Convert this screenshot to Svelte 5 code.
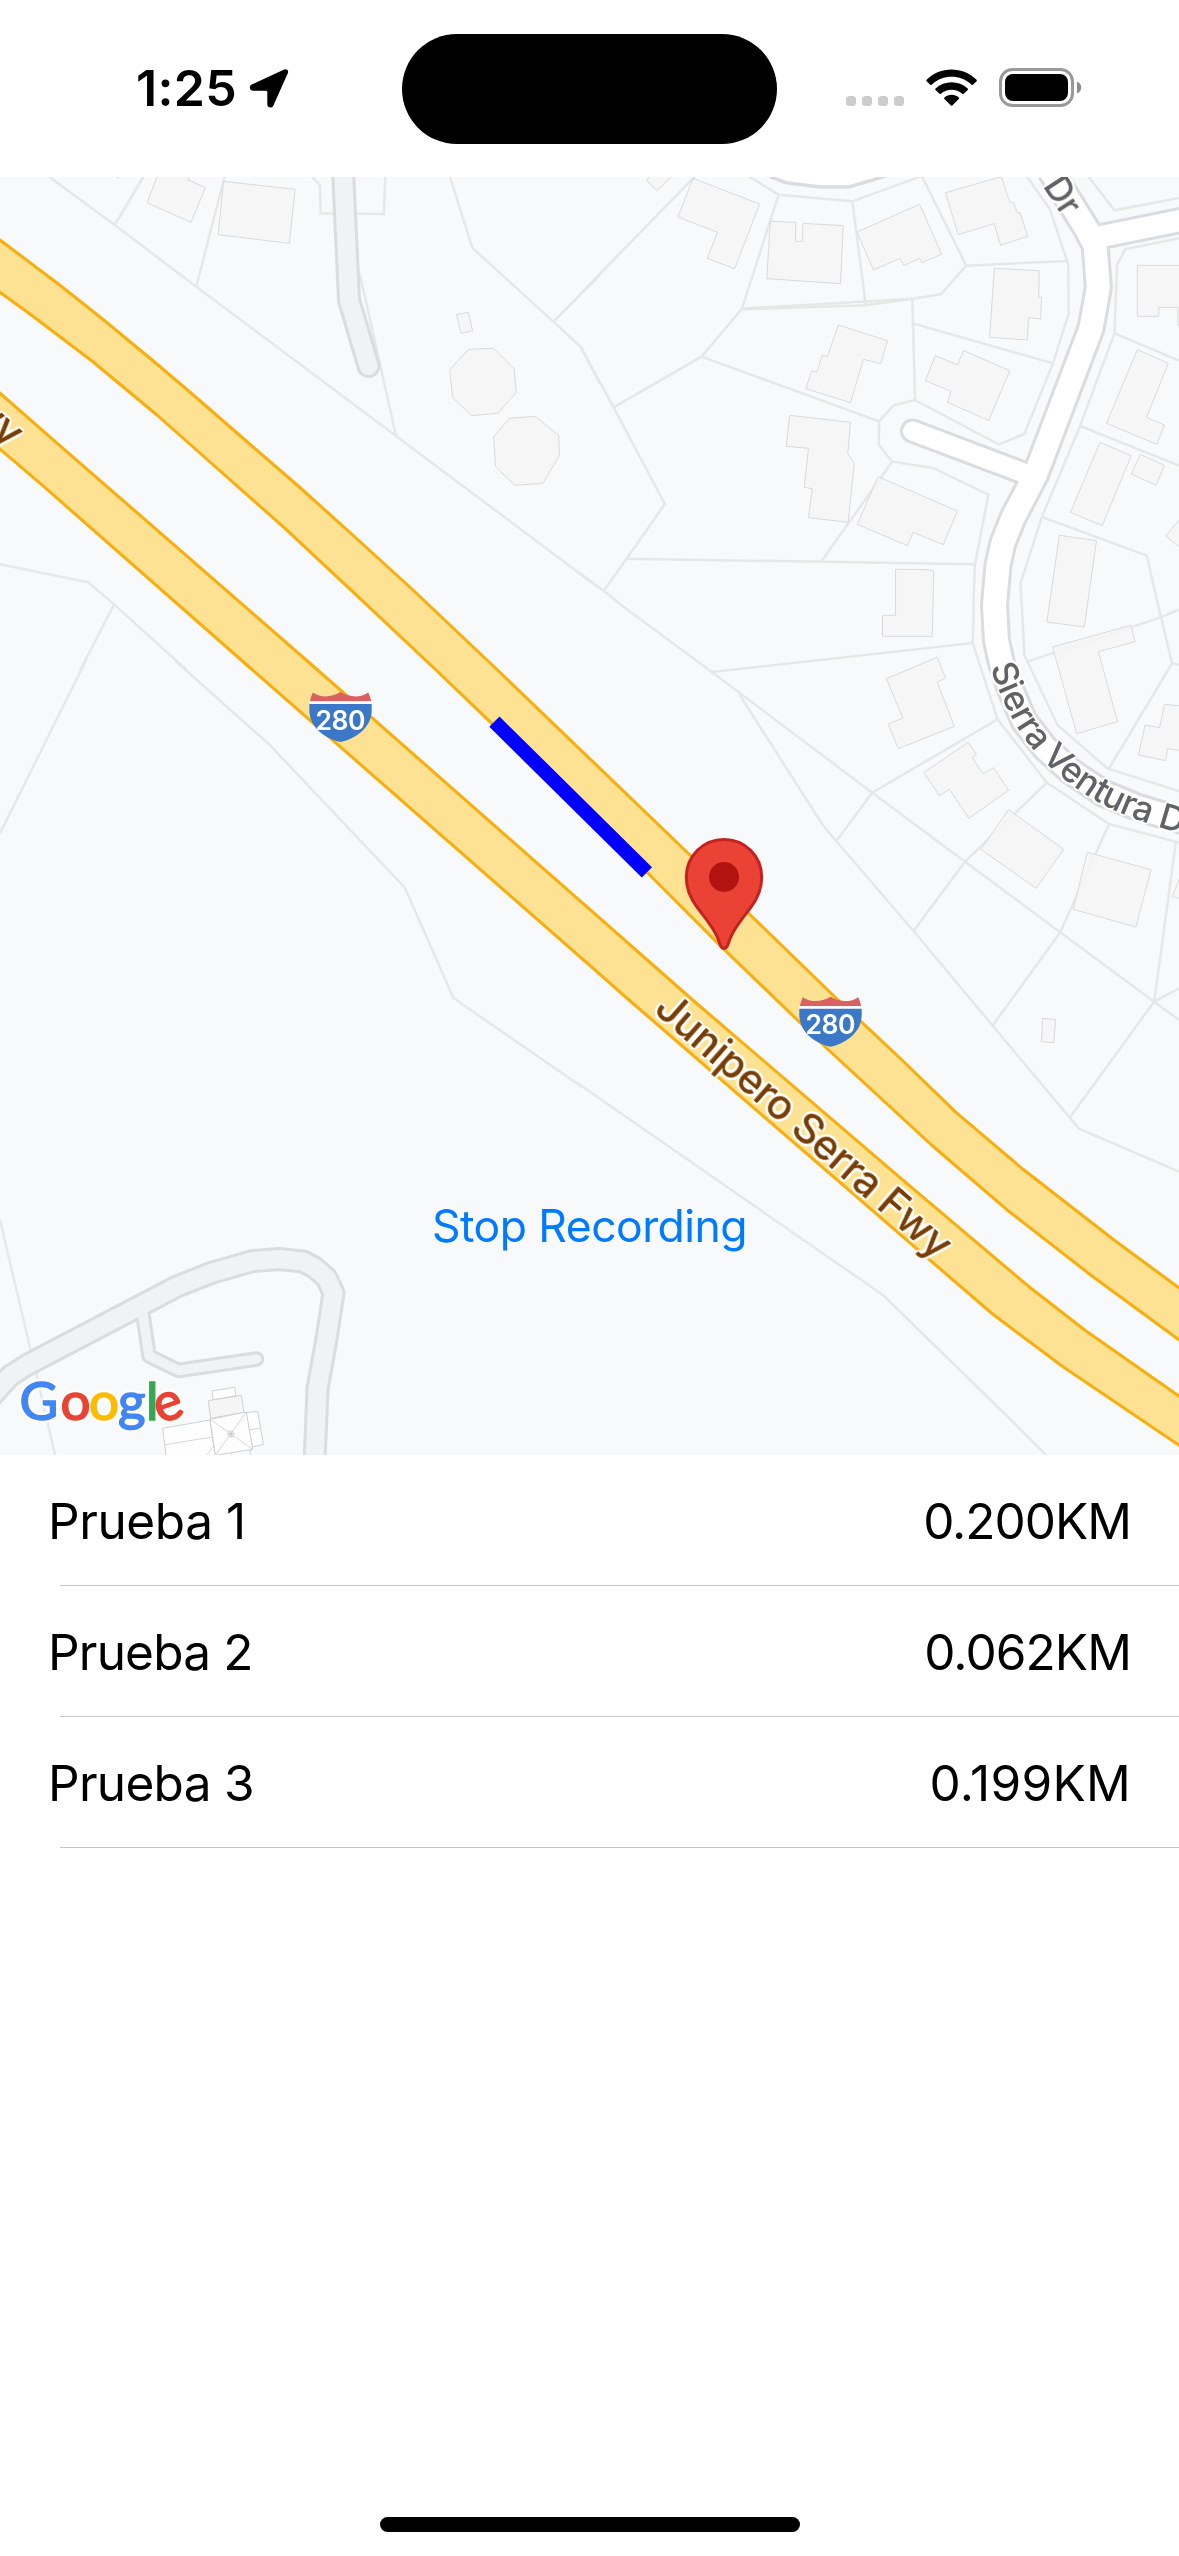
<script>
  const rows = [
    { name: 'Prueba 1', distance: '0.200KM', nameTracking: -0.4, tracking: -1 },
    { name: 'Prueba 2', distance: '0.062KM', nameTracking: -0.8, tracking: -0.9 },
    { name: 'Prueba 3', distance: '0.199KM', nameTracking: -0.7, tracking: 0.3 }
  ];

  // Map sectors, each with its own local grid: lot boundaries and building footprints.
  const sectors = [
    {
      grid: 'translate(0 170) scale(.38265 .33333)',
      lots: [
        '128,20 300,165 513,350 1035,798 1568,1256',
        '375,20 300,165',
        '587,20 513,350',
        '815,20 836,46 838,130 1003,132 1007,20',
        '940,310 1035,798',
        '1176,20 1234,233 1446,455 1519,532 1568,642',
        '1446,455 1568,315',
        '0,1183 231,1237 298,1303 488,1500',
        '298,1303 210,1500'
      ],
      buildings: [
        '303,18 308,26 313,18',
        '413,14 384,98 499,157 537,53 492,30 496,14',
        '584,34 771,58 756,220 570,194',
        '1193,434 1224,427 1235,482 1205,490',
        '1224,538 1290,535 1344,597 1349,667 1301,730 1233,737 1183,683 1175,600',
        '1331,745 1399,739 1460,796 1462,856 1419,940 1345,946 1295,890 1290,801'
      ]
    },
    {
      grid: 'translate(580 170) scale(.38202 .33333)',
      lots: [
        '300,20 0,373',
        '0,528 88,712 222,1002 122,1166 62,1262',
        '0,1210 62,1262 100,1297',
        '440,18 520,74 713,94 895,18 1011,287 1275,273',
        '1011,287 945,373 870,386 424,416 318,560 88,712',
        '424,418 748,406 870,386',
        '520,74 424,416',
        '713,94 748,406',
        '318,560 783,754',
        '870,386 877,690 1096,823 1163,792 1238,580 1279,432 1278,285 1275,273 1230,118 1165,12',
        '873,461 1238,580',
        '877,690 821,706 783,754 782,824 817,875 924,894 1069,974 1034,1183 1030,1300',
        '817,875 632,1174',
        '122,1166 1034,1183',
        '1330,18 1399,121 1568,84',
        '1568,205 1428,237 1406,284 1399,490 1309,768 1209,1041 1153,1240 1156,1300',
        '1399,490 1568,572',
        '1309,768 1568,887',
        '1209,1041 1484,1157 1510,1290'
      ],
      buildings: [
        '175,32 201,62 242,18 182,18',
        '296,25 470,102 405,296 333,265 360,187 256,141',
        '498,154 565,157 564,214 583,214 583,160 689,167 682,341 489,326',
        '725,186 889,103 947,253 895,278 889,265 848,287 838,265 768,300',
        '957,68 1103,20 1125,97 1135,97 1144,128 1152,128 1172,199 1101,226 1084,161 990,194',
        '1085,295 1202,302 1201,382 1208,382 1206,447 1174,443 1171,510 1072,502',
        '676,465 805,512 787,581 742,568 708,698 591,656 607,602 620,606 634,556 648,559',
        '930,557 988,584 1004,542 1125,602 1070,752 962,697 971,664 904,632',
        '549,736 708,757 701,850 718,880 702,1057 598,1043 608,956 587,952 598,835 540,829',
        '780,920 988,1023 951,1124 872,1087 857,1127 726,1063',
        '826,1198 886,1198 926,1201 922,1402 918,1399 792,1399 792,1336 826,1336',
        '1459,286 1575,286 1575,475 1565,465 1565,412 1515,412 1515,439 1459,439',
        '1459,539 1540,580 1483,742 1530,765 1510,823 1378,760',
        '1361,817 1443,857 1367,1067 1284,1027',
        '1467,853 1530,886 1508,946 1443,912',
        '1575,1040 1533,1098 1575,1137',
        '1255,1096 1352,1112 1320,1371 1222,1356'
      ]
    },
    {
      grid: 'translate(0 660) scale(.38265 .33333)',
      lots: ['225,0 0,520', '456,0 705,255 1058,683 1185,1014 1520,1280'],
      buildings: []
    },
    {
      grid: 'translate(580 600) scale(.38202 .33333)',
      lots: [
        '90,0 345,216 765,578 1008,785 1257,997 1503,1205 1568,1260',
        '345,216 1028,129',
        '1031,0 1028,129 1093,358 1222,548 1385,672 1560,725 1575,728',
        '418,285 637,678 873,993 1080,1277 1282,1553 1306,1586 1568,1715',
        '1093,358 765,578 673,720',
        '1222,548 1008,785 873,993',
        '1385,672 1257,997 1080,1277',
        '1560,725 1503,1205 1282,1553',
        '1503,1205 1568,1165',
        '1156,0 1163,165 1250,375 1380,505 1568,573',
        '1170,185 1520,52 1568,28',
        '1510,0 1550,190 1384,507',
        '1550,190 1575,196'
      ],
      buildings: [
        '802,236 935,172 957,234 935,247 980,379 833,446 807,372 845,354',
        '900,518 1016,427 1038,464 1027,473 1055,521 1083,503 1122,571 1018,655 967,568 941,587',
        '1122,629 1266,748 1194,865 1049,748',
        '1328,757 1495,809 1455,981 1291,928',
        '1237,141 1442,76 1453,125 1357,155 1407,365 1300,401',
        '1575,318 1530,313 1517,383 1479,375 1462,465 1533,482 1538,446 1575,452',
        '1575,820 1550,890 1575,897',
        '1211,1255 1245,1259 1240,1328 1208,1325'
      ]
    },
    {
      grid: 'translate(580 1000) scale(.38202 .33333)',
      lots: ['-10,247 793,885 1115,1245 1219,1364'],
      buildings: []
    },
    {
      grid: 'translate(0 1060) scale(.38265 .33333)',
      lots: ['0,480 80,870 145,1190'],
      buildings: []
    }
  ];

  const driveways = [
    { d: 'M343 170L349 300L368.5 366', w: 24 },
    {
      d: 'M-12 1400L10 1376L27 1365L176 1287L211 1273L253 1261L279 1259L303 1261.5L314.5 1267.5L326.5 1278L333.5 1293L326 1342L317.6 1388L314.5 1462',
      w: 24
    },
    { d: 'M142 1308L149 1356L178.5 1370.5L256.5 1359', w: 15.5 }
  ];

  const streets = [
    {
      d: 'M1050 170L1086 228L1095 245L1098.4 287.3L1091 328.3L1035.4 475L1013.2 517.3L1003 542.7L998 565L994.5 605L996.4 640L1001.4 663L1010 688L1024 721L1045 748L1071 771.5L1103 793L1138 807.5L1190 823',
      w: 29
    },
    { d: 'M1094 238L1190 218.5', w: 27 },
    { d: 'M912.5 431L1029 475', w: 25 }
  ];

  const freeways = [
    'M-6 235.5L0 240L59 284.5L100 317L151 359L191 393L245 440L300.5 488L356 538L413 590L497.5 670L580 749.3L691 856L748 912.7L836 998L902 1060L956 1112.3L1023 1169.3L1115 1240.7L1186 1293V1345L1092 1276L1008 1210.7L931.5 1145L826.4 1048L723 948.3L648 873.3L491.7 723.3L436 670L358 596.7L285 528.3L206.6 459L157 415L92 361L30.6 314.5L-6 288Z',
    'M-6 388L0 393.2L61 446.7L126.3 503.3L317.6 670L600 918.3L692.7 1000L904.7 1181.7L1029 1286.7L1086 1331L1186 1401V1450L1063 1366.7L992.6 1314L914.3 1246.7L629 1000L600 974.3L252.6 670L44 486.7L-6 444Z'
  ];

  const shields = [
    { x: 309.3, y: 692 },
    { x: 799.3, y: 996.7 }
  ];
</script>

<div class="screen">
  <header class="status">
    <div class="side left">
      <span class="time">1:25</span>
      <svg class="arrow" width="40" height="40" viewBox="0 0 40 40">
        <path d="M35.2 .6C37.8-.5 40 1.600 38.800 4.300L24.400 36.600C22.900 39.800 18.300 39 18.300 35.300V22.900Q18.300 21.700 17.100 21.700H4.200C.6 21.700-.5 17 2.800 15.400Z" />
      </svg>
    </div>
    <div class="island"></div>
    <div class="side right">
      <svg width="240" height="42" viewBox="0 0 240 42">
        <g class="dots">
          <rect x="0" y="28" width="10" height="10" rx="3.500" />
          <rect x="16" y="28" width="10" height="10" rx="3.500" />
          <rect x="32" y="28" width="10" height="10" rx="3.500" />
          <rect x="48" y="28" width="10" height="10" rx="3.500" />
        </g>
        <path d="M80.600 11.800C94-2 117-2 130.600 11.800Q131.200 12.500 130.600 13.200L126.900 16.700Q126.200 17.300 125.500 16.700C114.500 6.200 96.700 6.200 85.700 16.700Q85 17.300 84.300 16.700L80.600 13.200Q80 12.500 80.600 11.800Z" />
        <path d="M89.500 20.500C98.500 12 112.700 12 121.700 20.500Q122.300 21.200 121.700 21.900L117.700 25.700Q117 26.300 116.300 25.700C110.200 20.300 101 20.300 94.900 25.700Q94.200 26.300 93.500 25.700L89.500 21.900Q88.900 21.200 89.500 20.500Z" />
        <path d="M98.400 29.500C102.500 25.900 108.700 25.900 112.800 29.500Q113.500 30.200 112.800 30.900L106.300 37.400Q105.600 38 104.900 37.400L98.400 30.900Q97.700 30.200 98.400 29.500Z" />
        <rect class="shell" x="154.500" y="1.500" width="72" height="36" rx="12" />
        <rect x="159" y="6" width="63" height="27" rx="8" />
        <path class="cap" d="M231 13.500Q235.200 15.500 235.200 19.500T231 25.500Z" />
      </svg>
    </div>
  </header>

  <section class="map">
    <svg class="canvas" width="1179" height="1278" viewBox="0 177 1179 1278">
      <defs>
        <!-- Solid outline behind a whole label, so neighbouring letters stay intact -->
        <filter id="halo" filterUnits="userSpaceOnUse" x="-60" y="-80" width="1400" height="1600" color-interpolation-filters="sRGB">
          <feGaussianBlur in="SourceAlpha" stdDeviation="2.300" />
          <feComponentTransfer result="spread"><feFuncA type="linear" slope="9" intercept="-.5" /></feComponentTransfer>
          <feFlood flood-color="#fffefa" />
          <feComposite in2="spread" operator="in" result="outline" />
          <feMerge><feMergeNode in="outline" /><feMergeNode in="SourceGraphic" /></feMerge>
        </filter>
      </defs>

      {#each sectors as s}
        <g class="lots" transform={s.grid}>
          {#each s.lots as points}<polyline {points} />{/each}
        </g>
      {/each}
      {#each sectors as s}
        <g class="buildings" transform={s.grid}>
          {#each s.buildings as points}<polygon {points} />{/each}
        </g>
      {/each}

      <g class="house" transform="translate(0 1360) scale(.33333)">
        <path class="roof" d="M636 93L704 82L708 107L640 120Z" />
        <path d="M625 122L724 106L732 157L632 175Z" />
        <path class="roof" d="M488 205L630 180L645 285L650 300H500Z" />
        <path class="roof" d="M737 158L773 154L790 253L757 261Z" />
        <path class="roof" d="M630 178L739 156L758 268L646 286Z" />
        <path class="thin" d="M496 254L637 231M630 178L758 268M739 156L646 286M746 210L780 204M620 285L642 256M695 280V290M751 270V290" />
        <circle cx="693" cy="222" r="9" />
        <circle class="hub" cx="693" cy="222" r="4" />
      </g>

      <g class="driveway-edge">{#each driveways as r}<path d={r.d} stroke-width={r.w} />{/each}</g>
      <g class="driveway">{#each driveways as r}<path d={r.d} stroke-width={r.w - 6} />{/each}</g>

      <path class="crescent" d="M768 172L771 177L786 182.700L820.700 187L849 187L886 176L890 172" />
      <g class="street-edge">{#each streets as r}<path d={r.d} stroke-width={r.w} />{/each}</g>
      <g class="street">{#each streets as r}<path d={r.d} stroke-width={r.w - 6} />{/each}</g>

      {#each freeways as d}<path class="freeway" {d} />{/each}

      <path class="track" d="M494.400 721.700L646.900 872.300" />

      <path id="sierra" class="guide" d="M990.500 667C995 683 1004 703 1013 720C1023 738 1036 754 1050.500 767.500C1062 778 1079 791 1096 801C1120 814 1147 825 1202 839" />
      <g filter="url(#halo)">
        <text class="street-name"><textPath href="#sierra">Sierra Ventura Dr</textPath></text>
        <text class="street-name" text-anchor="end" transform="translate(1063 217.500) rotate(57)">a Dr</text>
        <text class="freeway-name" textLength="378" lengthAdjust="spacing" transform="translate(652.500 1011.500) rotate(41.300)">Junipero Serra Fwy</text>
        <text class="freeway-name" text-anchor="end" transform="translate(8 449) rotate(41.300)">Fwy</text>
      </g>

      {#each shields as s}
        <g transform="translate({s.x} {s.y})">
          <path class="band" d="M3.500 .5Q16 8.500 31.200 0Q46.500 8.500 59 .5Q61 5 62 9.500H.5Q1.500 5 3.500 .5Z" />
          <path class="gap" d="M0 9.300H62.400V12.300H0Z" />
          <path class="badge" d="M0 12H62.400V18C62.400 34 49 46 31.200 50C13.400 46 0 34 0 18Z" />
          <text class="number" x="31.200" y="37.500" textLength="50">280</text>
        </g>
      {/each}

      <path class="pin" d="M724 839.500C744.800 839.500 761.700 856 761.700 877.200C761.700 889 757.500 898.500 751 907C743 918 735.500 926 730.800 937C728.800 941.500 728.500 944 727 946.500C725.600 949 722.400 949 721 946.500C719.500 944 719.200 941.500 717.200 937C712.500 926 705 918 697 907C690.500 898.500 686.300 889 686.300 877.200C686.300 856 703.200 839.500 724 839.500Z" />
      <circle class="eye" cx="724" cy="877" r="15" />

      <text class="logo" y="1420" filter="url(#halo)"><tspan class="b" x="19.500">G</tspan><tspan class="r" x="60.500">o</tspan><tspan class="y" x="89">o</tspan><tspan class="b" x="118">g</tspan><tspan class="g" x="146">l</tspan><tspan class="r" x="160" y="1424" rotate="-20">e</tspan></text>
    </svg>
    <button class="record">Stop Recording</button>
  </section>

  <ul class="list">
    {#each rows as row}
      <li>
        <span class="name" style:letter-spacing="{row.nameTracking}px">{row.name}</span>
        <span class="distance" style:letter-spacing="{row.tracking}px">{row.distance}</span>
      </li>
    {/each}
  </ul>

  <footer><div class="home"></div></footer>
</div>

<style>
  :global(body) { background: #fff; }
  .screen {
    width: 1179px;
    height: 2556px;
    display: flex;
    flex-direction: column;
    background: #fff;
    color: #000;
    font-family: Inter, 'Liberation Sans', sans-serif;
    overflow: hidden;
  }

  .status {
    height: 177px;
    flex: none;
    box-sizing: border-box;
    padding-top: 33.500px;
    display: grid;
    grid-template-columns: 402px 375px 402px;
    align-items: start;
  }
  .side { height: 110px; display: flex; align-items: center; }
  .left { box-sizing: border-box; padding-left: 136px; gap: 12px; }
  .time { font-size: 50px; line-height: 60px; font-weight: 600; letter-spacing: .3px; padding-bottom: 1px; }
  .arrow { flex: none; }
  .island { height: 110.500px; border-radius: 56px; background: #000; }
  .right { padding-left: 69px; align-items: flex-start; padding-top: 34.500px; height: 75.500px; }
  .dots { fill: #ccc; }
  .shell { fill: none; stroke: #999; stroke-width: 3; }
  .cap { fill: #8c8c8c; }

  .map { position: relative; height: 1278px; flex: none; background: #f8f9fb; overflow: hidden; }
  .canvas { display: block; }
  .lots polyline { fill: none; stroke: #e6e7e7; stroke-width: 2.500px; vector-effect: non-scaling-stroke; }
  .buildings polygon {
    fill: #f5f5f5;
    fill-opacity: .88;
    stroke: #d9dadb;
    stroke-width: 1px;
    vector-effect: non-scaling-stroke;
  }
  .house path, .house circle { fill: #f5f5f5; stroke: #cfd0d1; stroke-width: 3; }
  .house .roof { fill: #fefefe; }
  .house .thin { fill: none; stroke-width: 2.500; }
  .house .hub { fill: #bbb; }

  .driveway path, .driveway-edge path, .street path, .street-edge path {
    fill: none;
    stroke-linecap: round;
    stroke-linejoin: round;
  }
  .driveway-edge path { stroke: #dbdcdf; }
  .driveway path { stroke: #f1f2f4; }
  .street-edge path { stroke: #dbdce0; }
  .street path { stroke: #fff; }
  .crescent { fill: #fff; stroke: #dbdce0; stroke-width: 3.500; }
  .freeway { fill: #fde293; stroke: #fbad0b; stroke-width: 3; stroke-linejoin: round; }
  .track { fill: none; stroke: #00f; stroke-width: 14.500; }
  .guide { fill: none; }

  text { font-family: Inter, 'Liberation Sans', sans-serif; }
  .street-name { font-size: 35px; font-weight: 500; fill: #5f6368; letter-spacing: -.5px; }
  .freeway-name { font-size: 42px; font-weight: 550; fill: #783c05; letter-spacing: -.6px; }
  .band { fill: #d96161; }
  .gap { fill: #fff; }
  .badge { fill: #3b78c8; }
  .number { font-size: 26.500px; font-weight: 600; fill: #fff; text-anchor: middle; }
  .pin { fill: #ea4335; stroke: #c5221f; stroke-width: 3; }
  .eye { fill: #b31412; }
  .logo {
    font-family: Lato, Roboto, sans-serif;
    font-size: 53px;
    font-weight: 400;
    stroke-width: 1.600;
  }
  .b { fill: #4285f4; stroke: #4285f4; }
  .r { fill: #ea4335; stroke: #ea4335; }
  .y { fill: #fbbc05; stroke: #fbbc05; }
  .g { fill: #34a853; stroke: #34a853; }

  .record {
    position: absolute;
    left: 0;
    right: 0;
    bottom: 202px;
    margin: 0 auto;
    width: 360px;
    padding: 0;
    border: 0;
    background: none;
    color: #007aff;
    font: 400 44.500px/54px Inter, sans-serif;
    letter-spacing: -.55px;
    white-space: nowrap;
  }

  .list { margin: 0; padding: 0; list-style: none; }
  li {
    position: relative;
    height: 131px;
    box-sizing: border-box;
    padding: 1px 48px 0 48px;
    display: flex;
    align-items: center;
    justify-content: space-between;
    font-size: 49.500px;
  }
  li::after {
    content: '';
    position: absolute;
    left: 60px;
    right: 0;
    bottom: 0;
    height: 1px;
    background: #c6c6c8;
  }

  footer { margin-top: auto; padding-bottom: 24px; display: flex; justify-content: center; }
  .home { width: 420px; height: 15px; border-radius: 8px; background: #000; }
</style>
